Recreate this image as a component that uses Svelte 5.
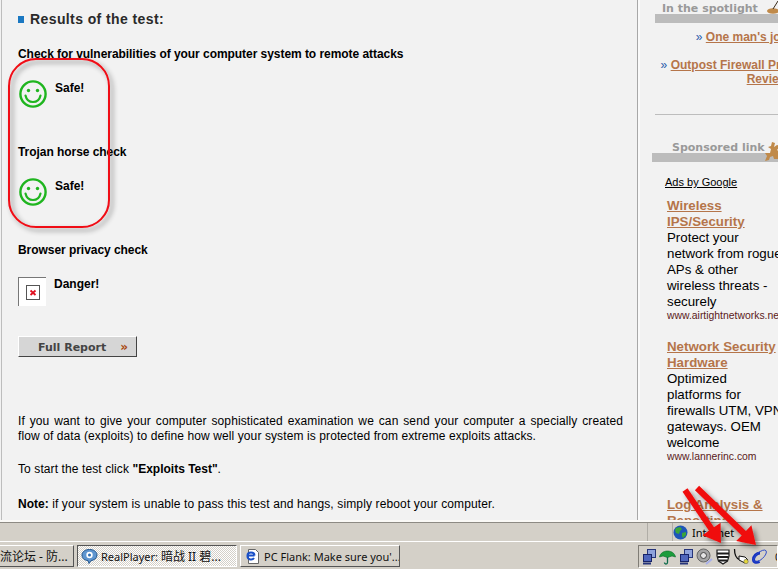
<script>
	const ads = [
		{
			title: 'Wireless IPS/Security',
			body: 'Protect your network from rogue APs & other wireless threats - securely',
			url: 'www.airtightnetworks.net'
		},
		{
			title: 'Network Security Hardware',
			body: 'Optimized platforms for firewalls UTM, VPN gateways. OEM welcome',
			url: 'www.lannerinc.com'
		},
		{ title: 'Log Analysis & Reporting', body: '', url: '' }
	];
</script>

{#snippet smiley()}
	<svg class="status-icon" width="30" height="30" viewBox="0 0 30 30">
		<circle cx="15" cy="15" r="12.6" fill="#f2f2f2" stroke="#1fb51f" stroke-width="2.4" />
		<circle cx="10.5" cy="11.5" r="1.7" fill="#1fb51f" />
		<circle cx="19.5" cy="11.5" r="1.7" fill="#1fb51f" />
		<path d="M7.5 16.5c1 4.5 4 6.500 7.500 6.500s6.500-2 7.500-6.500" fill="none" stroke="#1fb51f" stroke-width="2.2" stroke-linecap="round" />
	</svg>
{/snippet}

{#snippet network()}
	<svg width="14" height="17" viewBox="0 0 14 17">
		<rect x="5.500" y="1.500" width="8" height="8" fill="#8ea2dc" stroke="#27357a" />
		<rect x="1.500" y="6.500" width="8" height="7" fill="#4f66bc" stroke="#182468" />
		<path d="M1 15.500h8" stroke="#27357a" stroke-width="2" />
	</svg>
{/snippet}

<div class="screen">
	<div class="browser">
		<main class="content">
			<h2><span class="bullet"></span>Results of the test:</h2>

			<h3 class="first">Check for vulnerabilities of your computer system to remote attacks</h3>
			<div class="result">
				{@render smiley()}
				<b>Safe!</b>
			</div>

			<h3>Trojan horse check</h3>
			<div class="result">
				{@render smiley()}
				<b>Safe!</b>
			</div>

			<h3>Browser privacy check</h3>
			<div class="result danger">
				<div class="broken">
					<svg width="14" height="15" viewBox="0 0 14 15">
						<rect x="0.500" y="0.500" width="13" height="14" fill="#fff" stroke="#555" />
						<path d="M4.500 5.500l5 4.500M9.500 5.500l-5 4.500" stroke="#e01020" stroke-width="1.800" />
					</svg>
				</div>
				<b>Danger!</b>
			</div>

			<button class="report">Full Report<span class="chevrons">»</span></button>

			<p class="intro">If you want to give your computer sophisticated examination we can send your computer a specially created flow of data (exploits) to define how well your system is protected from extreme exploits attacks.</p>
			<p>To start the test click <b>"Exploits Test"</b>.</p>
			<p class="note"><b>Note:</b> if your system is unable to pass this test and hangs, simply reboot your computer.</p>
		</main>

		<aside class="sidebar">
			<div class="side-head spotlight">
				<span>In the spotlight</span>
				<svg width="12" height="13" viewBox="0 0 12 13">
					<ellipse cx="6" cy="10" rx="6" ry="2.800" fill="#c08a4a" />
					<path d="M6 8l5-8" stroke="#3a2a18" stroke-width="1" />
				</svg>
			</div>
			<div class="spot-links">
				<p><span class="raquo">»</span> <a href="#top">One man's job</a></p>
				<p><span class="raquo">»</span> <a href="#top">Outpost Firewall Pro Review</a></p>
			</div>
			<hr />
			<div class="side-head sponsored">
				<span>Sponsored link</span>
				<svg class="critter" width="16" height="20" viewBox="0 0 16 20">
					<path d="M7 0l3 1-1 4 3-2 3 1-3 4 3 2-1 3 1 4H9l-1-3-3 1-1 3-4 1 2-5-2-3 5 0 1-4-3-2 3-1z" fill="#c08a4a" />
				</svg>
			</div>
			<a class="by-google" href="#top">Ads by Google</a>
			{#each ads as ad}
				<div class="ad">
					<a href="#top">{ad.title}</a>
					{#if ad.body}<div class="ad-body">{ad.body}</div>{/if}
					{#if ad.url}<div class="ad-url">{ad.url}</div>{/if}
				</div>
			{/each}
		</aside>
	</div>

	<footer class="statusbar">
		<div class="cell grow"></div>
		<div class="cell small"></div>
		<div class="cell zone">
			<svg width="15" height="15" viewBox="0 0 15 15">
				<circle cx="7.500" cy="7.500" r="7" fill="#1d55b8" />
				<path d="M3 3l4-1 2 2-2 2-1 3-3-1-1-3zM9 8l4-1 0 3-3 3-1-2z" fill="#3aa53a" />
			</svg>
			<span>Internet</span>
		</div>
	</footer>

	<nav class="taskbar">
		<div class="task cut"><span class="cjk">流论坛 - 防...</span></div>
		<div class="task active">
			<svg width="17" height="17" viewBox="0 0 17 17">
				<path d="M8.500 1.500c4 0 7.500 2 7.500 5.500s-3.500 5.500-6 5.500l-2 3-1-3C4 12.500 1 10.500 1 7s3.500-5.500 7.500-5.500z" fill="#5f96d0" stroke="#25588f" />
				<circle cx="8.500" cy="7" r="3.200" fill="#fff" />
				<circle cx="8.500" cy="7" r="1.500" fill="#2f6fb4" />
			</svg>
			<span>RealPlayer: <span class="cjk">暗战 II 碧...</span></span>
		</div>
		<div class="task">
			<svg width="17" height="17" viewBox="0 0 17 17">
				<path d="M4.500 1.500h7l3 3v11h-10z" fill="#fff" stroke="#666" />
				<path d="M10.500 7.500h-7c0-4 7-4 7 0M3.500 8c0 4 5 4.500 6.500 2" fill="none" stroke="#1a50c8" stroke-width="2" />
			</svg>
			<span>PC Flank: Make sure you'...</span>
		</div>
		<div class="tray">
			{@render network()}
			<svg width="17" height="17" viewBox="0 0 17 17">
				<path d="M0.500 9C2 1 15 1 16.500 9l-3.500-1-4.500 1.500L4 8z" fill="#1c9c3c" stroke="#0c6a28" stroke-width="0.600" />
				<path d="M8.500 9v5.500c0 2-3 2-3 0" fill="none" stroke="#0c6a4a" stroke-width="1.300" />
			</svg>
			{@render network()}
			<svg width="17" height="17" viewBox="0 0 17 17">
				<circle cx="7.500" cy="7.500" r="6.500" fill="#a4a4a4" stroke="#666" />
				<circle cx="7.500" cy="7.500" r="3" fill="#e4e4e4" stroke="#444" />
				<path d="M10 16l6-5" stroke="#a8b0e8" stroke-width="2" />
			</svg>
			<svg width="14" height="17" viewBox="0 0 14 17">
				<path d="M1 2h12v6l-1.500 5L7 16l-4.500-3L1 8z" fill="#fff" stroke="#1c1c1c" stroke-width="1.200" />
				<path d="M1 5.500h12M1.500 9h11M3 12.500h8" stroke="#1c1c1c" stroke-width="1.900" />
			</svg>
			<svg width="17" height="17" viewBox="0 0 17 17">
				<path d="M1.500 1c0 7 2 9.500 5 10.500h2" fill="none" stroke="#111" stroke-width="1.300" />
				<path d="M6 8l6 1 3 3-3 3-6-3z" fill="#fff" stroke="#111" />
				<circle cx="13" cy="13.500" r="2.200" fill="#e4d63a" stroke="#555" stroke-width="0.500" />
			</svg>
			<svg class="beta" width="17" height="17" viewBox="0 0 17 17">
				<path d="M9 5C5.500 5 2.500 8.500 2.500 11.500c0 3 3 3.500 6 2" fill="none" stroke="#1430c0" stroke-width="3" />
				<ellipse cx="9" cy="8" rx="8" ry="3.500" transform="rotate(-42 9 8)" fill="none" stroke="#2a48c8" stroke-width="0.900" />
			</svg>
			<span class="clock">09:41</span>
		</div>
	</nav>

	<!-- annotations drawn on top of the screenshot -->
	<svg class="marks" width="778" height="569" viewBox="0 0 778 569">
		<defs>
			<filter id="soft" x="-20%" y="-20%" width="140%" height="140%">
				<feDropShadow dx="3" dy="3" stdDeviation="2.500" flood-color="#000" flood-opacity="0.450" />
			</filter>
		</defs>
		<rect x="9" y="59" width="100" height="168" rx="27" fill="none" stroke="#f00a14" stroke-width="2" filter="url(#soft)" />
		<g filter="url(#soft)" fill="#f01010">
			<polygon points="687.500,488.300 714,527.300 720.600,522.800 721,543 702.400,535.200 709,530.700 682.500,491.700" />
			<polygon points="699.100,485.800 745.900,531 751.400,525.300 756,545 736.200,541.100 741.700,535.400 694.900,490.200" />
		</g>
	</svg>
</div>

<style>
	:global(body) {
		margin: 0;
		overflow: hidden;
	}
	.screen {
		position: relative;
		width: 778px;
		height: 569px;
		overflow: hidden;
		display: flex;
		flex-direction: column;
		background: #f2f2f2;
		font-family: 'Liberation Sans', Arial, sans-serif;
		font-size: 12px;
		color: #000;
	}
	.browser {
		height: 520px;
		flex: none;
		display: flex;
		overflow: hidden;
	}
	.content {
		width: 637px;
		flex: none;
		box-sizing: border-box;
		margin-left: 1px;
		padding: 11px 14px 0 16px;
		border-left: 1px solid #bdbdbd;
		border-right: 1px solid #a8a8a8;
	}
	h2 {
		margin: 0;
		font-size: 14px;
		line-height: 17px;
		color: #2a2a2a;
		letter-spacing: 0.400px;
		display: flex;
		align-items: center;
	}
	.bullet {
		width: 6px;
		height: 7px;
		background: #1a78c2;
		margin-right: 6px;
	}
	h3 {
		margin: 0;
		font-size: 12px;
		line-height: 15px;
		font-weight: bold;
		letter-spacing: -0.050px;
	}
	h3.first {
		margin-top: 19px;
	}
	.result {
		display: flex;
		align-items: flex-start;
		height: 83px;
		padding-top: 18px;
		box-sizing: border-box;
		line-height: 15px;
	}
	.status-icon {
		margin: -1px 7px 0 0;
		display: block;
	}
	.result b {
		margin-top: 1px;
	}
	.danger {
		height: 78px;
	}
	.broken {
		width: 28px;
		height: 29px;
		box-sizing: border-box;
		margin-top: 1px;
		border-left: 1px solid #777;
		border-top: 1px solid #777;
		background: #fff;
		margin-right: 8px;
		display: flex;
		align-items: center;
		justify-content: center;
	}
	.report {
		display: block;
		width: 119px;
		height: 21px;
		padding: 0 0 0 19px;
		text-align: left;
		background: #d6d6d6;
		border: 1px solid;
		border-color: #fff #444 #444 #fff;
		font-family: 'DejaVu Sans', Verdana, sans-serif;
		font-size: 11px;
		font-weight: bold;
		color: #444;
	}
	.chevrons {
		color: #a84810;
		margin-left: 14px;
		font-size: 12px;
	}
	p {
		margin: 0;
		line-height: 15px;
	}
	.content p {
		margin-bottom: 18px;
		letter-spacing: 0.100px;
	}
	.content p b {
		letter-spacing: 0;
	}
	.content .intro {
		margin-top: 57px;
		text-align: justify;
	}
	.content .note {
		margin-top: 20px;
		letter-spacing: 0.130px;
	}
	.sidebar {
		width: 150px;
		flex: none;
		border-left: 2px solid #fafafa;
		box-sizing: border-box;
		padding-left: 15px;
	}
	.side-head {
		display: flex;
		align-items: flex-end;
		font-family: 'DejaVu Sans', Verdana, sans-serif;
		font-size: 11px;
		font-weight: bold;
		color: #999;
		border-bottom: 9px solid #bcbcbc;
		line-height: 11px;
		white-space: nowrap;
	}
	.side-head svg {
		flex: none;
	}
	.spotlight {
		height: 23px;
		padding-left: 7px;
		box-sizing: border-box;
	}
	.spotlight svg {
		margin-left: 9px;
	}
	.sponsored {
		margin: 27px 0 0 -3px;
		padding-left: 20px;
	}
	.critter {
		margin: 0 0 -9px 0;
	}
	.spot-links {
		text-align: right;
		font-weight: bold;
		margin-top: 7px;
		padding-left: 3px;
	}
	.spot-links p {
		line-height: 14px;
		margin-bottom: 14px;
	}
	.raquo {
		color: #2a5caa;
		font-weight: normal;
	}
	.spot-links a,
	.ad a {
		color: #b5754a;
	}
	hr {
		border: 0;
		border-top: 1px solid #bdbdbd;
		margin: 28px 0 0;
	}
	.by-google {
		display: block;
		margin: 14px 0 0 10px;
		font-size: 11px;
		color: #000;
	}
	.ad {
		margin: 10px 0 0 12px;
		width: 118px;
		font-size: 13.300px;
		line-height: 16px;
	}
	.ad + .ad {
		margin-top: 17px;
	}
	.ad:last-child {
		margin-top: 34px;
	}
	.ad a {
		font-weight: bold;
	}
	.ad-url {
		font-size: 10.400px;
		line-height: 12px;
		color: #5a2020;
		white-space: nowrap;
	}
	.statusbar {
		height: 21px;
		flex: none;
		display: flex;
		background: #d4d0c8;
		border-top: 2px solid #faf9f6;
		box-shadow: inset 0 1px 0 #8d8a83;
		box-sizing: border-box;
	}
	.cell {
		border-left: 1px solid #b0ada6;
		box-sizing: border-box;
		margin: 1px 0 0 2px;
	}
	.grow {
		width: 645px;
		border: 0;
		margin: 0;
	}
	.small {
		width: 23px;
	}
	.zone {
		flex: 1;
		display: flex;
		align-items: center;
		gap: 4px;
		font-family: 'Noto Sans', sans-serif;
		font-size: 11px;
	}
	.taskbar {
		flex: 1;
		display: flex;
		align-items: center;
		gap: 3px;
		padding-top: 1px;
		background: #d4d0c8;
		border-top: 1px solid #fff;
		font-family: 'Noto Sans', 'Noto Sans CJK SC', sans-serif;
		font-size: 11px;
		color: #111;
	}
	.cjk {
		font-size: 12px;
	}
	.task {
		width: 160px;
		height: 22px;
		flex: none;
		box-sizing: border-box;
		display: flex;
		align-items: center;
		gap: 3px;
		padding-left: 3px;
		white-space: nowrap;
		overflow: hidden;
		border: 1px solid;
		border-color: #fff #555 #555 #fff;
	}
	.task svg {
		flex: none;
	}
	.cut {
		width: 74px;
		padding-left: 0;
		border-left: 0;
	}
	.active {
		border-color: #555 #fff #fff #555;
		background: repeating-conic-gradient(#fff 0 25%, #d4d0c8 0 50%) 0 0 / 2px 2px;
	}
	.tray {
		margin-left: auto;
		width: 140px;
		height: 23px;
		flex: none;
		box-sizing: border-box;
		display: flex;
		align-items: center;
		gap: 3px;
		padding-left: 3px;
		border: 1px solid;
		border-color: #807d76 #fff #fff #807d76;
		white-space: nowrap;
		overflow: hidden;
	}
	.tray svg {
		flex: none;
	}
	.beta {
		margin-left: -2px;
	}
	.clock {
		margin-left: 4px;
	}
	.marks {
		position: absolute;
		top: 0;
		left: 0;
		pointer-events: none;
	}
</style>
